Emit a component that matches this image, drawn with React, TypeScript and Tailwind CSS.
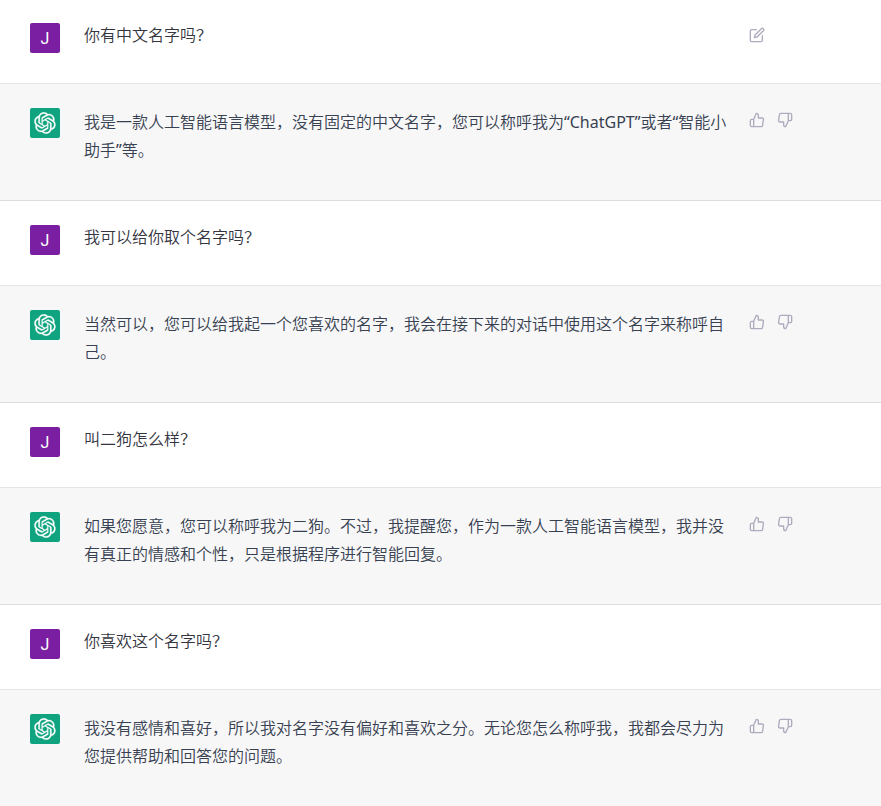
import { FiEdit, FiThumbsDown, FiThumbsUp } from 'react-icons/fi'

type Message = {
  role: 'user' | 'assistant'
  text: string
  editable?: boolean
}

const messages: Message[] = [
  { role: 'user', text: '你有中文名字吗？', editable: true },
  {
    role: 'assistant',
    text: '我是一款人工智能语言模型，没有固定的中文名字，您可以称呼我为“ChatGPT”或者“智能小助手”等。',
  },
  { role: 'user', text: '我可以给你取个名字吗？' },
  {
    role: 'assistant',
    text: '当然可以，您可以给我起一个您喜欢的名字，我会在接下来的对话中使用这个名字来称呼自己。',
  },
  { role: 'user', text: '叫二狗怎么样？' },
  {
    role: 'assistant',
    text: '如果您愿意，您可以称呼我为二狗。不过，我提醒您，作为一款人工智能语言模型，我并没有真正的情感和个性，只是根据程序进行智能回复。',
  },
  { role: 'user', text: '你喜欢这个名字吗？' },
  {
    role: 'assistant',
    text: '我没有感情和喜好，所以我对名字没有偏好和喜欢之分。无论您怎么称呼我，我都会尽力为您提供帮助和回答您的问题。',
  },
]

function OpenAILogo() {
  return (
    <svg width="22" height="22" viewBox="0 0 41 41" fill="none" aria-hidden="true">
      <path
        fill="currentColor"
        stroke="currentColor"
        strokeWidth="0.5"
        d="M37.5324 16.8707C37.9808 15.5241 38.1363 14.0974 37.9886 12.6859C37.8409 11.2744 37.3934 9.91076 36.676 8.68622C35.6126 6.83404 33.9882 5.3676 32.0373 4.4985C30.0864 3.62941 27.9098 3.40259 25.8215 3.85078C24.8796 2.7893 23.7219 1.94125 22.4257 1.36341C21.1295 0.785575 19.7249 0.491269 18.3058 0.500197C16.1708 0.495044 14.0893 1.16803 12.3614 2.42214C10.6335 3.67624 9.34853 5.44666 8.6917 7.47815C7.30085 7.76286 5.98686 8.3414 4.8377 9.17505C3.68854 10.0087 2.73073 11.0782 2.02839 12.312C0.956464 14.1591 0.498905 16.2988 0.721698 18.4228C0.944492 20.5467 1.83612 22.5449 3.268 24.1293C2.81966 25.4759 2.66413 26.9026 2.81182 28.3141C2.95951 29.7256 3.40701 31.0892 4.12437 32.3138C5.18791 34.1659 6.8123 35.6322 8.76321 36.5013C10.7141 37.3704 12.8907 37.5973 14.9789 37.1492C15.9208 38.2107 17.0786 39.0587 18.3747 39.6366C19.6709 40.2144 21.0755 40.5087 22.4946 40.4998C24.6307 40.5054 26.7133 39.8321 28.4418 38.5772C30.1704 37.3223 31.4556 35.5506 32.1119 33.5179C33.5027 33.2332 34.8167 32.6547 35.9659 31.821C37.115 30.9874 38.0728 29.9178 38.7752 28.684C39.8458 26.8371 40.3023 24.6979 40.0789 22.5748C39.8556 20.4517 38.9639 18.4544 37.5324 16.8707ZM22.4978 37.8849C20.7443 37.8874 19.0459 37.2733 17.6994 36.1501C17.7601 36.117 17.8666 36.0586 17.936 36.0161L25.9004 31.4156C26.1003 31.3019 26.2663 31.137 26.3813 30.9378C26.4964 30.7386 26.5563 30.5124 26.5549 30.2825V19.0542L29.9213 20.998C29.9389 21.0068 29.9541 21.0198 29.9656 21.0359C29.977 21.052 29.9842 21.0707 29.9867 21.0902V30.3889C29.9842 32.375 29.1946 34.2791 27.7909 35.6841C26.3872 37.0892 24.4838 37.8806 22.4978 37.8849ZM6.39227 31.0064C5.51397 29.4888 5.19742 27.7107 5.49804 25.9832C5.55718 26.0187 5.66048 26.0818 5.73461 26.1244L13.699 30.7248C13.8975 30.8408 14.1233 30.902 14.3532 30.902C14.583 30.902 14.8088 30.8408 15.0073 30.7248L24.731 25.1103V28.9979C24.7321 29.0177 24.7283 29.0376 24.7199 29.0556C24.7115 29.0736 24.6988 29.0893 24.6829 29.1012L16.6317 33.7497C14.9096 34.7416 12.8643 35.0097 10.9447 34.4954C9.02506 33.9811 7.38785 32.7263 6.39227 31.0064ZM4.29707 13.6194C5.17156 12.0998 6.55279 10.9364 8.19885 10.3327C8.19885 10.4013 8.19491 10.5228 8.19491 10.6071V19.808C8.19351 20.0378 8.25334 20.2638 8.36823 20.4629C8.48312 20.6619 8.64893 20.8267 8.84863 20.9404L18.5723 26.5542L15.206 28.4979C15.1894 28.5089 15.1703 28.5155 15.1505 28.5173C15.1307 28.5191 15.1107 28.516 15.0924 28.5082L7.04046 23.8557C5.32135 22.8601 4.06716 21.2235 3.55289 19.3046C3.03862 17.3858 3.30624 15.3413 4.29707 13.6194ZM31.955 20.0556L22.2312 14.4411L25.5976 12.4981C25.6142 12.4872 25.6333 12.4805 25.6531 12.4787C25.6729 12.4769 25.6928 12.4801 25.7111 12.4879L33.7631 17.1364C34.9967 17.849 36.0017 18.8982 36.6606 20.1613C37.3194 21.4244 37.6047 22.849 37.4832 24.2684C37.3617 25.6878 36.8382 27.0432 35.9743 28.1759C35.1103 29.3086 33.9415 30.1717 32.6047 30.6641C32.6047 30.5947 32.6047 30.4733 32.6047 30.3889V21.188C32.6066 20.9586 32.5474 20.7328 32.4332 20.5338C32.319 20.3348 32.154 20.1698 31.955 20.0556ZM35.3055 15.0128C35.2464 14.9765 35.1431 14.9142 35.069 14.8717L27.1045 10.2712C26.906 10.1554 26.6803 10.0943 26.4504 10.0943C26.2206 10.0943 25.9948 10.1554 25.7963 10.2712L16.0726 15.8858V11.9982C16.0715 11.9783 16.0753 11.9585 16.0837 11.9405C16.0921 11.9225 16.1048 11.9068 16.1207 11.8949L24.1719 7.25025C25.4053 6.53903 26.8158 6.19376 28.2383 6.25482C29.6608 6.31589 31.0364 6.78077 32.2044 7.59508C33.3723 8.40939 34.2842 9.53945 34.8334 10.8531C35.3826 12.1667 35.5464 13.6095 35.3055 15.0128ZM14.2424 21.9419L10.8752 19.9981C10.8576 19.9893 10.8423 19.9763 10.8309 19.9602C10.8195 19.9441 10.8122 19.9254 10.8098 19.9058V10.6071C10.8107 9.18295 11.2173 7.78848 11.9819 6.58696C12.7466 5.38544 13.8377 4.42659 15.1275 3.82264C16.4173 3.21869 17.8524 2.99464 19.2649 3.1767C20.6775 3.35876 22.0089 3.93941 23.1034 4.85067C23.0427 4.88379 22.937 4.94215 22.8668 4.98473L14.9024 9.58517C14.7025 9.69878 14.5366 9.86356 14.4215 10.0626C14.3065 10.2616 14.2466 10.4877 14.2479 10.7175L14.2424 21.9419ZM16.071 17.9991L20.4018 15.4978L24.7325 17.9975V22.9985L20.4018 25.4983L16.071 22.9985V17.9991Z"
      />
    </svg>
  )
}

function UserMessage({ text, editable }: { text: string; editable?: boolean }) {
  return (
    <article className="border-b border-black/10 bg-white text-[#343541] first:-mt-px">
      <div className="flex pt-6 pr-[84px] pb-[30px] pl-[30px]">
        <div className="flex size-[30px] shrink-0 items-center justify-center rounded-xs bg-[#7b1fa2] pt-px font-[Roboto,sans-serif] text-base text-white">
          J
        </div>
        <p className="ml-6 min-w-0 flex-1 leading-6">{text}</p>
        <div className="ml-3 flex w-[52px] shrink-0 items-start text-[#acacbe]">
          {editable && (
            <button type="button" aria-label="编辑" className="p-1">
              <FiEdit size={16} />
            </button>
          )}
        </div>
      </div>
    </article>
  )
}

function AssistantMessage({ text }: { text: string }) {
  return (
    <article className="border-b border-black/10 bg-[#f7f7f8] text-[#374151]">
      <div className="flex pt-6 pr-[84px] pb-9 pl-[30px]">
        <div className="flex size-[30px] shrink-0 items-center justify-center rounded-xs bg-[#10a37f] text-white">
          <OpenAILogo />
        </div>
        <p className="ml-6 min-w-0 flex-1 leading-7">{text}</p>
        <div className="ml-3 flex w-[52px] shrink-0 items-start gap-1 text-[#acacbe]">
          <button type="button" aria-label="赞" className="p-1">
            <FiThumbsUp size={16} />
          </button>
          <button type="button" aria-label="踩" className="p-1">
            <FiThumbsDown size={16} />
          </button>
        </div>
      </div>
    </article>
  )
}

export default function App() {
  return (
    <main
      lang="zh-CN"
      className="flex min-h-screen flex-col overflow-hidden bg-[#f7f7f8] font-['Noto_Sans','Noto_Sans_CJK_SC_DemiLight','Noto_Sans_CJK_SC',sans-serif] text-base"
    >
      {messages.map((message, i) =>
        message.role === 'user' ? (
          <UserMessage key={i} text={message.text} editable={message.editable} />
        ) : (
          <AssistantMessage key={i} text={message.text} />
        )
      )}
    </main>
  )
}
